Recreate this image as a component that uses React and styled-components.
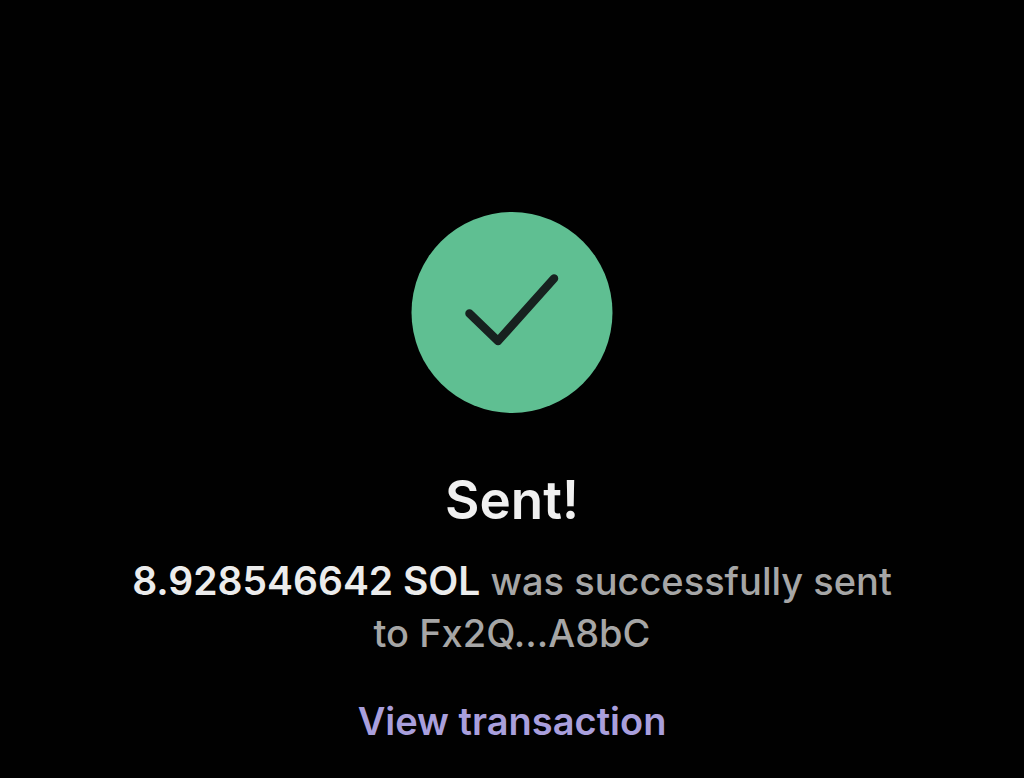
import React from "react";
import styled, { createGlobalStyle } from "styled-components";

const GlobalStyle = createGlobalStyle`
  * { box-sizing: border-box; }
  body {
    margin: 0;
    background: #010101;
    font-family: Inter, "Liberation Sans", sans-serif;
  }
`;

const Screen = styled.main`
  min-height: 100vh;
  display: flex;
  flex-direction: column;
  align-items: center;
  padding: 212px 24px 32px;
  text-align: center;
`;

const StatusIcon = styled.svg`
  display: block;
  width: 202px;
  height: 202px;
`;

const Title = styled.h1`
  margin: 52px 0 0;
  font-size: 53px;
  line-height: 68px;
  font-weight: 600;
  color: #f0f0f0;
`;

const Message = styled.p`
  margin: 21px 0 0;
  max-width: 800px;
  font-size: 38px;
  line-height: 52px;
  font-weight: 500;
  color: #a6a6a6;
`;

const Amount = styled.strong`
  font-size: 39px;
  font-weight: 600;
  color: #ececec;
`;

const TransactionLink = styled.a`
  margin-top: 36px;
  font-size: 38px;
  line-height: 52px;
  font-weight: 600;
  color: #a99fdc;
  text-decoration: none;
`;

export default function App() {
  return (
    <>
      <GlobalStyle />
      <Screen>
        <StatusIcon viewBox="0 0 202 202" aria-hidden="true">
          <circle cx="101" cy="100.500" r="100.500" fill="#5fbf92" />
          <path
            d="M58.500 101.500 L87 129 L143 66.500"
            fill="none"
            stroke="#17211f"
            strokeWidth="8.500"
            strokeLinecap="round"
            strokeLinejoin="round"
          />
        </StatusIcon>
        <Title>Sent!</Title>
        <Message>
          <Amount>8.928546642 SOL</Amount> was successfully sent
          <br />
          to Fx2Q...A8bC
        </Message>
        <TransactionLink href="#transaction">View transaction</TransactionLink>
      </Screen>
    </>
  );
}
